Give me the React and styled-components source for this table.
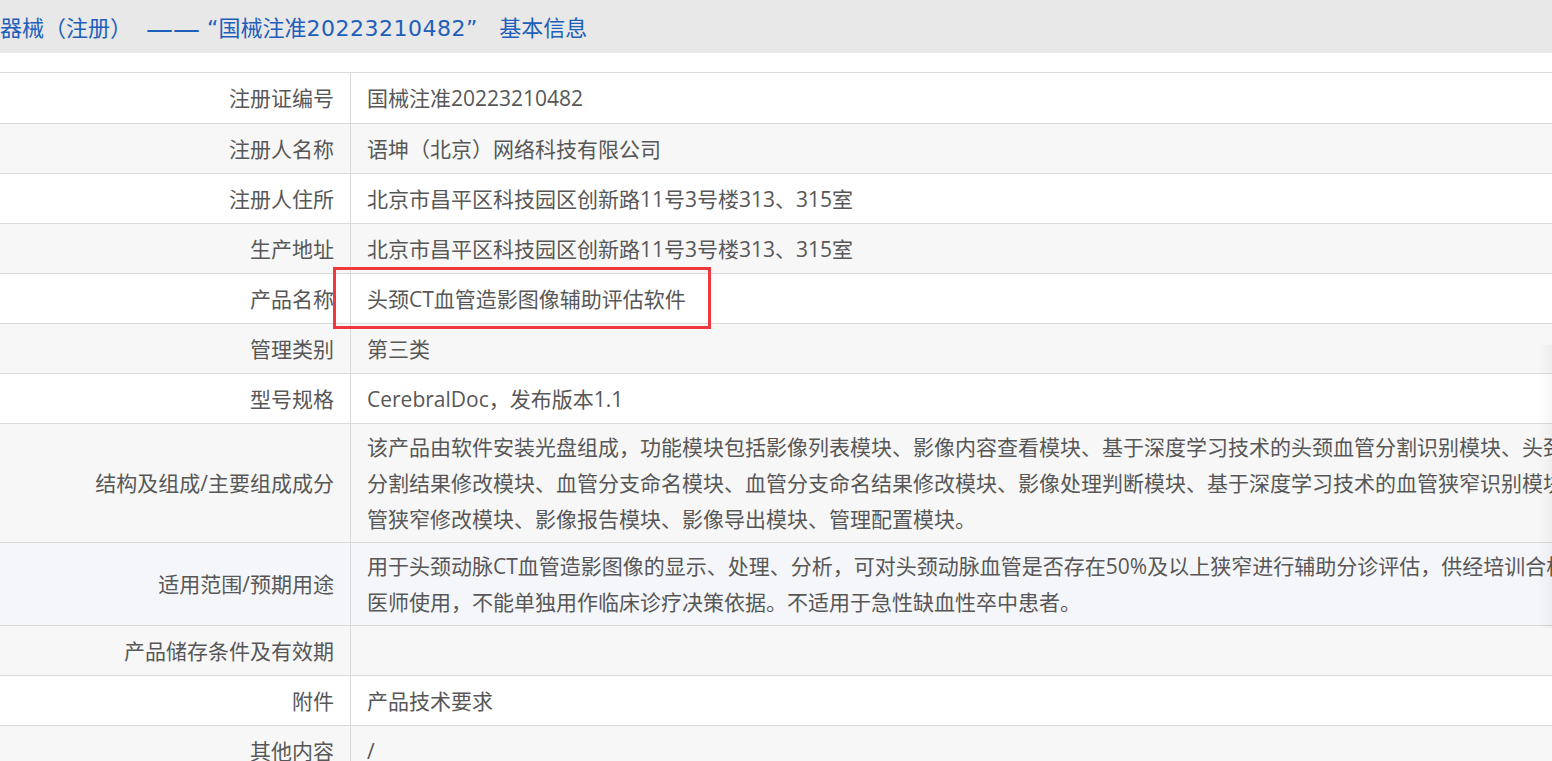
import React from 'react';
import styled, { createGlobalStyle } from 'styled-components';

const GlobalStyle = createGlobalStyle`
  html, body {
    margin: 0;
    padding: 0;
    background: #ffffff;
    overflow: hidden;
  }
  body {
    font-family: "Open Sans", "Noto Sans CJK SC", sans-serif;
  }
`;

const Viewport = styled.div`
  width: 100%;
  height: 761px;
  overflow: hidden;
`;

const Sheet = styled.div`
  width: 1684px;
  margin-left: -60px;
`;

const TitleBar = styled.div`
  height: 53px;
  background: #e8e8e8;
  display: flex;
  align-items: center;
  padding: 4px 0 0 16px;
  box-sizing: border-box;
  font-family: "DejaVu Sans", "Noto Sans CJK SC", sans-serif;
  font-size: 22px;
  line-height: 26px;
  color: #1d5fba;
  white-space: pre;
`;

const Dash = styled.span`
  font-size: 27px;
`;

const Code = styled.span`
  letter-spacing: 0.5px;
`;

const InfoTable = styled.div`
  margin-top: 19px;
  border-top: 1px solid #dadada;
`;

const rowBg = {
  white: '#ffffff',
  gray: '#f7f7f7',
  hover: '#f5f6fa',
};

const Row = styled.div`
  display: grid;
  grid-template-columns: 411px 1fr;
  border-bottom: 1px solid #dadada;
  background: ${({ $tone }) => rowBg[$tone]};
  font-size: 21px;
  line-height: 36px;
  color: #575757;

  &:first-child > div {
    min-height: 50px;
  }
`;

const Label = styled.div`
  min-height: 49px;
  box-sizing: border-box;
  padding: 5px 16px;
  border-right: 1px solid #dadada;
  display: flex;
  align-items: center;
  justify-content: flex-end;
  text-align: right;
`;

const Value = styled.div`
  position: relative;
  min-height: 49px;
  box-sizing: border-box;
  padding: 5px 16px;
  display: flex;
  align-items: center;
`;

const Highlight = styled.div`
  position: absolute;
  left: -18px;
  top: -7px;
  width: 378px;
  height: 62px;
  box-sizing: border-box;
  border: 3px solid #ef3a3d;
  pointer-events: none;
`;

const EdgeShade = styled.div`
  position: fixed;
  right: 0;
  top: 345px;
  width: 14px;
  height: 283px;
  background: linear-gradient(to right, rgba(0, 0, 0, 0), rgba(0, 0, 0, 0.035));
  pointer-events: none;
`;

const rows = [
  { label: '注册证编号', value: '国械注准20223210482' },
  { label: '注册人名称', value: '语坤（北京）网络科技有限公司' },
  { label: '注册人住所', value: '北京市昌平区科技园区创新路11号3号楼313、315室' },
  { label: '生产地址', value: '北京市昌平区科技园区创新路11号3号楼313、315室' },
  { label: '产品名称', value: '头颈CT血管造影图像辅助评估软件', marked: true },
  { label: '管理类别', value: '第三类' },
  { label: '型号规格', value: 'CerebralDoc，发布版本1.1' },
  {
    label: '结构及组成/主要组成成分',
    value:
      '该产品由软件安装光盘组成，功能模块包括影像列表模块、影像内容查看模块、基于深度学习技术的头颈血管分割识别模块、头颈血管 分割结果修改模块、血管分支命名模块、血管分支命名结果修改模块、影像处理判断模块、基于深度学习技术的血管狭窄识别模块、血管狭窄修改模块、影像报告模块、影像导出模块、管理配置模块。',
  },
  {
    label: '适用范围/预期用途',
    value:
      '用于头颈动脉CT血管造影图像的显示、处理、分析，可对头颈动脉血管是否存在50%及以上狭窄进行辅助分诊评估，供经培训合格的医师使用，不能单独用作临床诊疗决策依据。不适用于急性缺血性卒中患者。',
    hover: true,
  },
  { label: '产品储存条件及有效期', value: '' },
  { label: '附件', value: '产品技术要求' },
  { label: '其他内容', value: '/' },
];

export default function App() {
  return (
    <Viewport>
      <GlobalStyle />
      <Sheet>
        <TitleBar>
          医疗器械（注册）  <Dash>——</Dash> “国械注准<Code>20223210482</Code>”　基本信息
        </TitleBar>
        <InfoTable>
          {rows.map((row, i) => (
            <Row key={row.label} $tone={row.hover ? 'hover' : i % 2 ? 'gray' : 'white'}>
              <Label>{row.label}</Label>
              <Value>
                <span>{row.value}</span>
                {row.marked && <Highlight />}
              </Value>
            </Row>
          ))}
        </InfoTable>
      </Sheet>
      <EdgeShade />
    </Viewport>
  );
}
